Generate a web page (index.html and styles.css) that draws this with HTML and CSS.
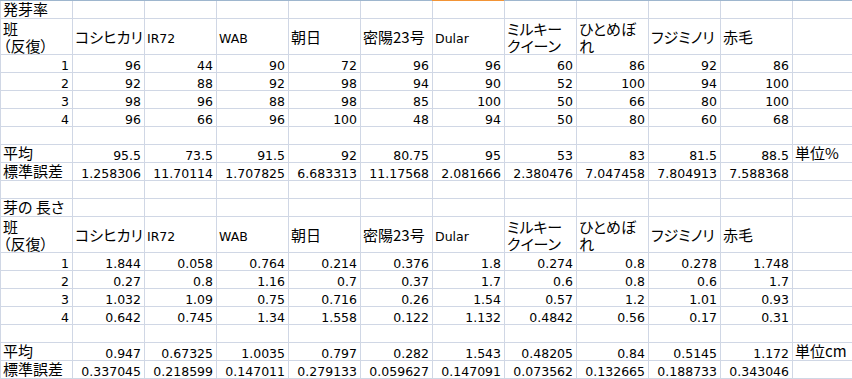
FILE: index.html
```html
<!DOCTYPE html>
<html lang="ja">
<head>
<meta charset="utf-8">
<title>発芽率・芽の長さ</title>
<link rel="stylesheet" href="styles.css">
</head>
<body>
<div class="edge"><div class="sel"></div></div>
<div class="sheet">
  <div class="row"><div class="t">発芽率</div><div></div><div></div><div></div><div></div><div></div><div></div><div></div><div></div><div></div><div></div><div></div></div>
  <div class="row hd"><div class="t">班<br>（反復）</div><div class="t">コシヒカリ</div><div class="l">IR72</div><div class="l">WAB</div><div class="t">朝日</div><div class="t">密陽23号</div><div class="l">Dular</div><div class="t">ミルキー<br>クイーン</div><div class="t">ひとめぼ<br>れ</div><div class="t">フジミノリ</div><div class="t">赤毛</div><div></div></div>
  <div class="row"><div class="n">1</div><div class="n">96</div><div class="n">44</div><div class="n">90</div><div class="n">72</div><div class="n">96</div><div class="n">96</div><div class="n">60</div><div class="n">86</div><div class="n">92</div><div class="n">86</div><div></div></div>
  <div class="row"><div class="n">2</div><div class="n">92</div><div class="n">88</div><div class="n">92</div><div class="n">98</div><div class="n">94</div><div class="n">90</div><div class="n">52</div><div class="n">100</div><div class="n">94</div><div class="n">100</div><div></div></div>
  <div class="row"><div class="n">3</div><div class="n">98</div><div class="n">96</div><div class="n">88</div><div class="n">98</div><div class="n">85</div><div class="n">100</div><div class="n">50</div><div class="n">66</div><div class="n">80</div><div class="n">100</div><div></div></div>
  <div class="row"><div class="n">4</div><div class="n">96</div><div class="n">66</div><div class="n">96</div><div class="n">100</div><div class="n">48</div><div class="n">94</div><div class="n">50</div><div class="n">80</div><div class="n">60</div><div class="n">68</div><div></div></div>
  <div class="row"><div></div><div></div><div></div><div></div><div></div><div></div><div></div><div></div><div></div><div></div><div></div><div></div></div>
  <div class="row"><div class="t">平均</div><div class="n">95.5</div><div class="n">73.5</div><div class="n">91.5</div><div class="n">92</div><div class="n">80.75</div><div class="n">95</div><div class="n">53</div><div class="n">83</div><div class="n">81.5</div><div class="n">88.5</div><div class="t">単位%</div></div>
  <div class="row"><div class="t">標準誤差</div><div class="n">1.258306</div><div class="n">11.70114</div><div class="n">1.707825</div><div class="n">6.683313</div><div class="n">11.17568</div><div class="n">2.081666</div><div class="n">2.380476</div><div class="n">7.047458</div><div class="n">7.804913</div><div class="n">7.588368</div><div></div></div>
  <div class="row"><div></div><div></div><div></div><div></div><div></div><div></div><div></div><div></div><div></div><div></div><div></div><div></div></div>
  <div class="row"><div class="t">芽の 長さ</div><div></div><div></div><div></div><div></div><div></div><div></div><div></div><div></div><div></div><div></div><div></div></div>
  <div class="row hd"><div class="t">班<br>（反復）</div><div class="t">コシヒカリ</div><div class="l">IR72</div><div class="l">WAB</div><div class="t">朝日</div><div class="t">密陽23号</div><div class="l">Dular</div><div class="t">ミルキー<br>クイーン</div><div class="t">ひとめぼ<br>れ</div><div class="t">フジミノリ</div><div class="t">赤毛</div><div></div></div>
  <div class="row"><div class="n">1</div><div class="n">1.844</div><div class="n">0.058</div><div class="n">0.764</div><div class="n">0.214</div><div class="n">0.376</div><div class="n">1.8</div><div class="n">0.274</div><div class="n">0.8</div><div class="n">0.278</div><div class="n">1.748</div><div></div></div>
  <div class="row"><div class="n">2</div><div class="n">0.27</div><div class="n">0.8</div><div class="n">1.16</div><div class="n">0.7</div><div class="n">0.37</div><div class="n">1.7</div><div class="n">0.6</div><div class="n">0.8</div><div class="n">0.6</div><div class="n">1.7</div><div></div></div>
  <div class="row"><div class="n">3</div><div class="n">1.032</div><div class="n">1.09</div><div class="n">0.75</div><div class="n">0.716</div><div class="n">0.26</div><div class="n">1.54</div><div class="n">0.57</div><div class="n">1.2</div><div class="n">1.01</div><div class="n">0.93</div><div></div></div>
  <div class="row"><div class="n">4</div><div class="n">0.642</div><div class="n">0.745</div><div class="n">1.34</div><div class="n">1.558</div><div class="n">0.122</div><div class="n">1.132</div><div class="n">0.4842</div><div class="n">0.56</div><div class="n">0.17</div><div class="n">0.31</div><div></div></div>
  <div class="row"><div></div><div></div><div></div><div></div><div></div><div></div><div></div><div></div><div></div><div></div><div></div><div></div></div>
  <div class="row"><div class="t">平均</div><div class="n">0.947</div><div class="n">0.67325</div><div class="n">1.0035</div><div class="n">0.797</div><div class="n">0.282</div><div class="n">1.543</div><div class="n">0.48205</div><div class="n">0.84</div><div class="n">0.5145</div><div class="n">1.172</div><div class="t">単位cm</div></div>
  <div class="row"><div class="t">標準誤差</div><div class="n">0.337045</div><div class="n">0.218599</div><div class="n">0.147011</div><div class="n">0.279133</div><div class="n">0.059627</div><div class="n">0.147091</div><div class="n">0.073562</div><div class="n">0.132665</div><div class="n">0.188733</div><div class="n">0.343046</div><div></div></div>
</div>
</body>
</html>
```
FILE: styles.css
```css
* {
  box-sizing: border-box;
  margin: 0;
  padding: 0;
}

html,
body {
  background: #fff;
}

body {
  width: 852px;
  height: 379px;
  overflow: hidden;
  color: #000;
  font-family: "Noto Sans CJK JP", sans-serif;
}

.edge {
  display: flex;
  height: 1px;
  background: #9eb6ce;
}

.edge .sel {
  margin-left: 432px;
  width: 72px;
  background: #f29436;
}

.sheet {
  display: flex;
  flex-direction: column;
  gap: 1px;
  padding: 0 0 1px 1px;
  background: #d0d7e5;
}

.row {
  display: grid;
  grid-template-columns: repeat(11, 71px) 1fr;
  gap: 1px;
  height: 17px;
}

.row.hd {
  height: 35px;
}

.row > div {
  background: #fff;
  white-space: nowrap;
}

.t {
  font-size: 15px;
  line-height: 16px;
  padding-left: 2px;
  font-feature-settings: "palt";
}

.n {
  font: 12.5px/13px "DejaVu Sans", sans-serif;
  text-align: right;
  padding: 4px 3px 0 0;
}

.l {
  font: 12.5px/13px "DejaVu Sans", sans-serif;
  padding: 4px 0 0 2px;
}

.hd > div {
  display: flex;
  flex-direction: column;
  justify-content: center;
}

.hd .t {
  line-height: 17px;
}
```
